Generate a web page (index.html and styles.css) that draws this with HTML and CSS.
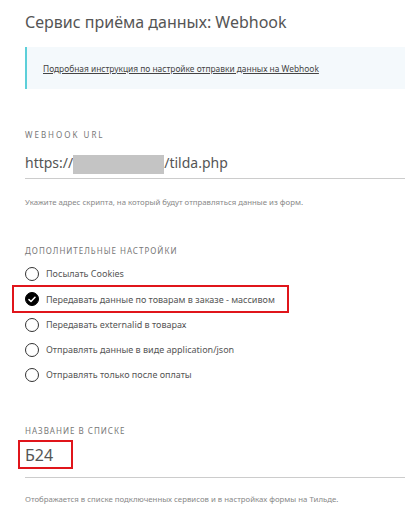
FILE: index.html
```html
<!DOCTYPE html>
<html>
  <head>
    <link rel="stylesheet" href="styles.css">
  </head>
  <body>
    <div class='page'>
      <h2 class='title'>Сервис приёма данных: Webhook</h2>

      <div class='info'>
        <a href='#'>Подробная инструкция по настройке отправки данных на Webhook</a>
      </div>

      <div class='field url-field'>
        <div class='label wide'>Webhook URL</div>
        <div class='input'>https://<span class='hidden'></span>/tilda.php</div>
        <div class='hint'>Укажите адрес скрипта, на который будут отправляться данные из форм.</div>
      </div>

      <div class='field options'>
        <div class='label'>Дополнительные настройки</div>
        <div class='option'><span class='radio'></span>Посылать Cookies</div>
        <div class='option marked'><span class='radio checked'>
          <svg width='8' height='7' viewBox='0 0 8 7'><path d='M1 3.6 L3 5.5 L7 1.2' fill='none' stroke='#fff' stroke-width='1.5' stroke-linecap='round' stroke-linejoin='round'/></svg>
        </span>Передавать данные по товарам в заказе - массивом</div>
        <div class='option'><span class='radio'></span>Передавать externalid в товарах</div>
        <div class='option'><span class='radio'></span>Отправлять данные в виде application/json</div>
        <div class='option'><span class='radio'></span>Отправлять только после оплаты</div>
      </div>

      <div class='field name-field'>
        <div class='label'>Название в списке</div>
        <div class='input'><span class='marked-name'>Б24</span></div>
        <div class='hint'>Отображается в списке подключенных сервисов и в настройках формы на Тильде.</div>
      </div>
    </div>
  </body>
</html>
```

FILE: styles.css
```css
body{
  margin:0;
  background-color:#fff;
  font-family:'Noto Sans', sans-serif;
  color:#333;
}

.page{
  padding:9px 8px 0 25px;
}

.title{
  margin:0;
  font-size:16px;
  font-weight:normal;
  color:#555;
  line-height:26px;
}

.info{
  margin-top:12px;
  height:42px;
  background-color:#f4f9fc;
  border-left:2px solid #5ccfd9;
  display:flex;
  align-items:center;
  padding-left:16px;
}
.info a{
  font-size:8.4px;
  color:#444;
  text-decoration:underline;
}

.label{
  font-size:8px;
  line-height:10px;
  text-transform:uppercase;
  letter-spacing:1px;
  color:#777;
}
.label.wide{
  letter-spacing:2px;
}

.url-field{
  margin-top:41px;
}

.input{
  margin-top:6px;
  border-bottom:1px solid #ccc;
  font-size:14px;
  color:#555;
  height:32px;
  display:flex;
  align-items:center;
}

.hidden{
  display:inline-block;
  width:91px;
  height:19px;
  background-color:#c4c4c4;
  margin-bottom:-4px;
}

.hint{
  margin-top:18px;
  font-size:7.8px;
  line-height:10px;
  color:#888;
}

.options{
  margin-top:39px;
}
.options .label{
  margin-bottom:5px;
}

.option{
  display:flex;
  align-items:center;
  height:25px;
  font-size:9px;
  color:#555;
}
.option.marked{
  margin:-1px 0 -1px -13px;
  padding-left:11px;
  width:262px;
  height:24px;
  border:2px solid #e0151b;
}

.radio{
  width:12px;
  height:12px;
  border:1.2px solid #333;
  border-radius:50%;
  margin-right:7px;
  display:flex;
  align-items:center;
  justify-content:center;
  box-sizing:content-box;
}
.radio.checked{
  background-color:#000;
  border-color:#000;
}

.name-field{
  margin-top:39px;
}
.name-field .input{
  margin-top:4px;
  height:37px;
  align-items:flex-start;
}

.marked-name{
  display:inline-block;
  border:2px solid #e0151b;
  margin-left:-7px;
  width:46px;
  height:25px;
  line-height:27px;
  padding-left:5px;
  font-size:16px;
}

.name-field .hint{
  margin-top:16px;
}
```
